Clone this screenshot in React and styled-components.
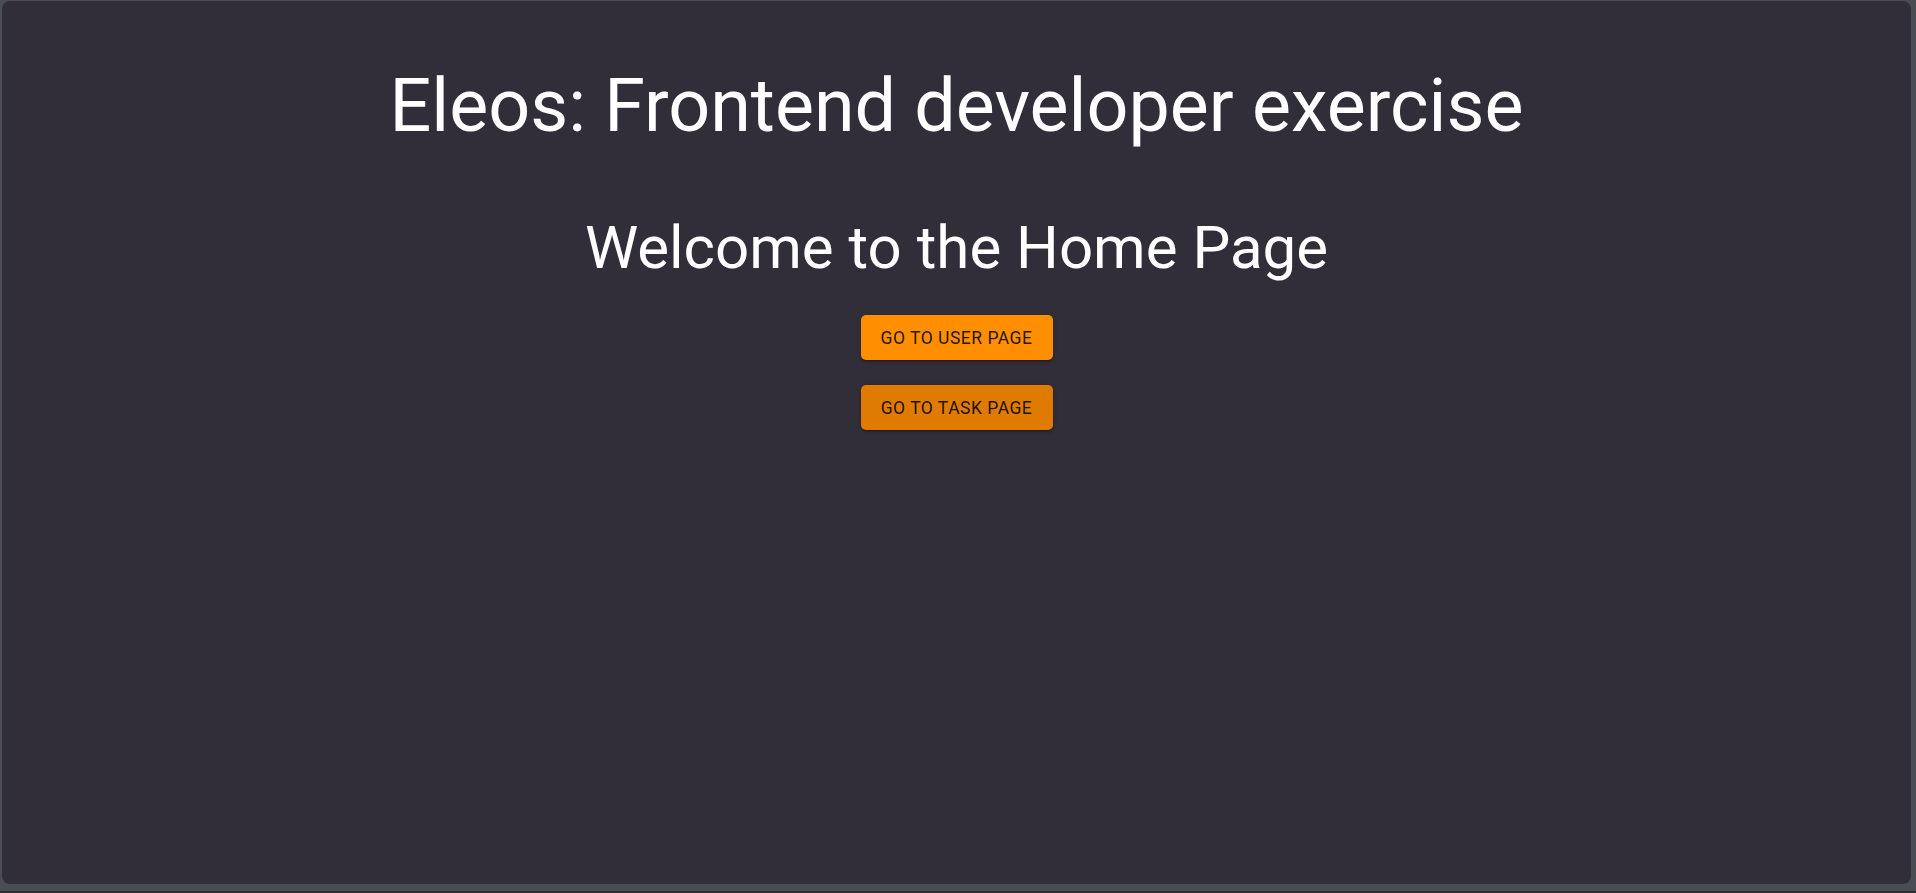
import React from 'react';
import styled, { createGlobalStyle } from 'styled-components';

const GlobalStyle = createGlobalStyle`
  html, body {
    margin: 0;
    padding: 0;
    height: 100%;
    background: #4a4d52;
  }
  #root {
    height: 100%;
  }
`;

const Frame = styled.div`
  box-sizing: border-box;
  height: 100vh;
  padding: 1px 5px 7px 2px;
  border-bottom: 2px solid #2e3033;
`;

const Card = styled.main`
  box-sizing: border-box;
  height: 100%;
  background: #312e39;
  border-radius: 8px;
  display: flex;
  flex-direction: column;
  align-items: center;
  font-family: Roboto, 'Liberation Sans', sans-serif;
  color: #fff;
`;

const Title = styled.h1`
  margin: 61px 0 0;
  font-size: 73.6px;
  font-weight: 400;
  line-height: 1.2;
`;

const Subtitle = styled.h2`
  margin: 63px 0 0;
  font-size: 60px;
  font-weight: 400;
  line-height: 1.167;
`;

const Actions = styled.div`
  display: flex;
  flex-direction: column;
  align-items: center;
  gap: 25px;
  margin-top: 32px;
`;

const Button = styled.button`
  box-sizing: border-box;
  width: 192px;
  height: 45px;
  border: 0;
  border-radius: 5px;
  background: ${(p) => (p.$dim ? '#df7b00' : '#ff8f00')};
  color: rgba(0, 0, 0, 0.87);
  font-family: Roboto, 'Liberation Sans', sans-serif;
  font-size: 17.5px;
  font-weight: 400;
  letter-spacing: 0.5px;
  text-transform: uppercase;
  box-shadow: 0 3px 1px -2px rgba(0, 0, 0, 0.2), 0 2px 2px 0 rgba(0, 0, 0, 0.14),
    0 1px 5px 0 rgba(0, 0, 0, 0.12);
  cursor: pointer;
`;

const App = () => {
  return (
    <>
      <GlobalStyle />
      <Frame>
        <Card>
          <Title>Eleos: Frontend developer exercise</Title>
          <Subtitle>Welcome to the Home Page</Subtitle>
          <Actions>
            <Button>Go to user page</Button>
            <Button $dim>Go to task page</Button>
          </Actions>
        </Card>
      </Frame>
    </>
  );
};

export default App;
